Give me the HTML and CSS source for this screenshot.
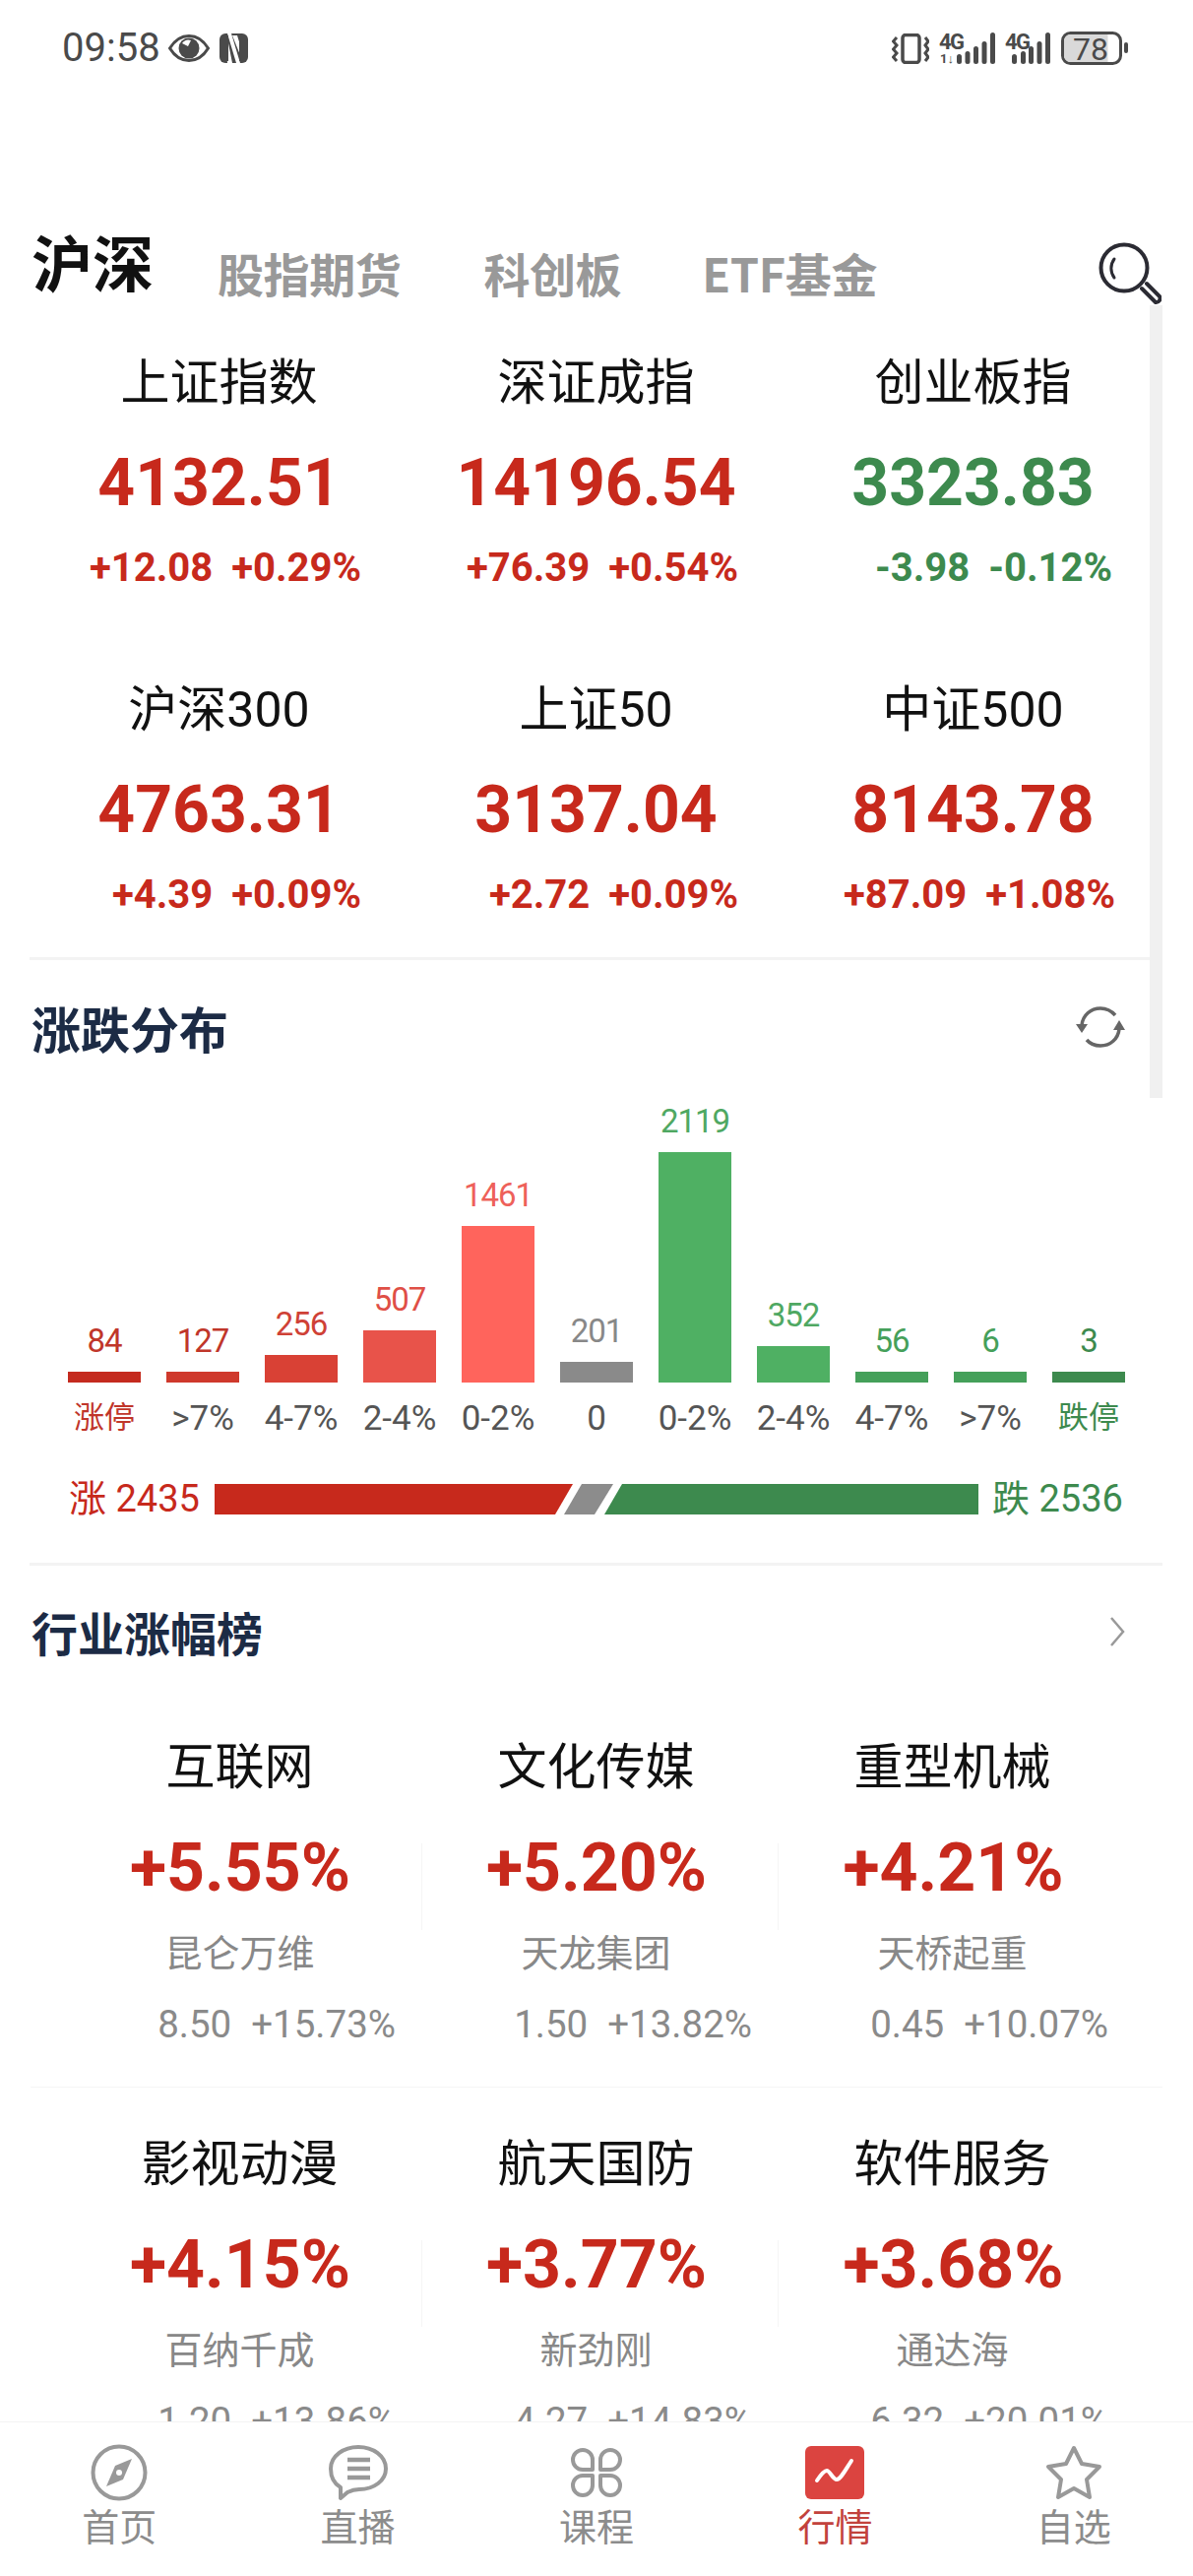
FILE: index.html
```html
<!DOCTYPE html>
<html lang="zh-CN">
<head>
<meta charset="utf-8">
<title>行情</title>
<link rel="stylesheet" href="styles.css">
</head>
<body>
<div class="phone">
  <header class="status">
    <div class="status-left">
      <span class="clock">09:58</span>
      <svg class="ic-eye" width="42" height="28" viewBox="0 0 42 28"><path d="M1.500 14C7 5 13.500 1.500 21 1.500S35 5 40.500 14C35 23 28.500 26.500 21 26.500S7 23 1.500 14Z" fill="none" stroke="#4a4a4a" stroke-width="3"/><circle cx="21" cy="14" r="10.500" fill="#4a4a4a"/><path d="M14 9a8 8 0 0 1 9-3l-3 6z" fill="#fff"/></svg>
      <svg class="ic-nfc" width="29" height="30" viewBox="0 0 29 30"><rect width="29" height="30" rx="6" fill="#4a4a4a"/><path d="M8 0h4l9 30h-4zM13 2h5l5 16-2 4zM6 8l2-3 5 25H8z" fill="#fff"/><path d="M6 2h3v26H6zM20 2h3v26h-3z" fill="#4a4a4a"/></svg>
    </div>
    <div class="status-right">
      <svg class="ic-vib" width="38" height="31" viewBox="0 0 38 31"><rect x="11" y="1.500" width="17" height="28" rx="3" fill="none" stroke="#4a4a4a" stroke-width="3.500"/><path d="M5 4 1.500 8 5 12 1.500 16 5 20 1.500 24 5 28M34 4 37 8 34 12 37 16 34 20 37 24 34 28" fill="none" stroke="#4a4a4a" stroke-width="3"/></svg>
      <svg class="sig sig-a" width="58" height="32" viewBox="0 0 58 32"><text class="sig-text" x="0" y="17">4G</text><text class="sig-small" x="1" y="31">1↓</text><g fill="#4a4a4a"><rect x="18" y="22" width="5" height="10" rx="2.500"/><rect x="26.500" y="19" width="5" height="13" rx="2.500"/><rect x="35" y="14" width="5" height="18" rx="2.500"/><rect x="43.500" y="9" width="5" height="23" rx="2.500"/><rect x="52" y="0" width="5" height="32" rx="2.500"/></g></svg>
      <svg class="sig sig-b" width="47" height="32" viewBox="0 0 47 32"><text class="sig-text" x="0" y="17">4G</text><g fill="#4a4a4a"><rect x="7" y="22" width="5" height="10" rx="2.500"/><rect x="16" y="19" width="5" height="13" rx="2.500"/><rect x="24" y="14" width="5" height="18" rx="2.500"/><rect x="32.500" y="9" width="5" height="23" rx="2.500"/><rect x="41" y="0" width="5" height="32" rx="2.500"/></g></svg>
      <svg class="sig ic-batt" width="68" height="34" viewBox="0 0 68 34"><rect x="1.500" y="1.500" width="59" height="31" rx="8" fill="#fff" stroke="#4a4a4a" stroke-width="3"/><path d="M9.500 3h38v28h-38a6.500 6.500 0 0 1-6.500-6.500v-15a6.500 6.500 0 0 1 6.500-6.500z" fill="#d9d9d9"/><text class="batt-text" x="30" y="28.500" text-anchor="middle">78</text><rect x="64" y="11" width="4" height="11" rx="2" fill="#4a4a4a"/></svg>
    </div>
  </header>

  <nav class="tabs">
    <span class="tab tab-on">沪深</span>
    <span class="tab">股指期货</span>
    <span class="tab">科创板</span>
    <span class="tab">ETF基金</span>
    <svg class="ic-search" width="64" height="66" viewBox="0 0 64 66"><circle cx="26" cy="26" r="23.500" fill="none" stroke="#2b2b33" stroke-width="4"/><path d="M16 17a16 16 0 0 0 0 19" fill="none" stroke="#2b2b33" stroke-width="3" stroke-linecap="round"/><path d="M44 47l14 14a4 4 0 0 0 4-6L49 42" fill="none" stroke="#2b2b33" stroke-width="4" stroke-linecap="round"/></svg>
  </nav>

  <main class="content">
    <section class="indices">
      <div class="idx"><h3 class="idx-name">上证指数</h3><div class="idx-val up">4132.51</div><div class="idx-chg up"><span>+12.08</span><span>+0.29%</span></div></div>
      <div class="idx"><h3 class="idx-name">深证成指</h3><div class="idx-val up">14196.54</div><div class="idx-chg up"><span>+76.39</span><span>+0.54%</span></div></div>
      <div class="idx"><h3 class="idx-name">创业板指</h3><div class="idx-val down">3323.83</div><div class="idx-chg down"><span>-3.98</span><span>-0.12%</span></div></div>
      <div class="idx"><h3 class="idx-name">沪深300</h3><div class="idx-val up">4763.31</div><div class="idx-chg up"><span>+4.39</span><span>+0.09%</span></div></div>
      <div class="idx"><h3 class="idx-name">上证50</h3><div class="idx-val up">3137.04</div><div class="idx-chg up"><span>+2.72</span><span>+0.09%</span></div></div>
      <div class="idx"><h3 class="idx-name">中证500</h3><div class="idx-val up">8143.78</div><div class="idx-chg up"><span>+87.09</span><span>+1.08%</span></div></div>
    </section>

    <section class="dist">
      <div class="sec-head">
        <h2 class="sec-title">涨跌分布</h2>
        <svg width="50" height="42" viewBox="0 0 50 42"><path d="M6 19C7 9 15 2 25 2c6 0 11 2.500 15 7" fill="none" stroke="#666" stroke-width="3.500"/><path d="M44 23c-1 10-9 17-19 17-6 0-11-2.500-14-6" fill="none" stroke="#666" stroke-width="3.500"/><path d="M0 18h12l-6 9zM38 24h12l-6-10z" fill="#666"/></svg>
      </div>
      <div class="chart">
        <div class="col"><span class="num t-r1">84</span><i class="bar b-r1" style="height:11px"></i><span class="lab lab-cjk t-r1">涨停</span></div>
        <div class="col"><span class="num t-r1">127</span><i class="bar b-r2" style="height:11px"></i><span class="lab">&gt;7%</span></div>
        <div class="col"><span class="num t-r2">256</span><i class="bar b-r3" style="height:28px"></i><span class="lab">4-7%</span></div>
        <div class="col"><span class="num t-r3">507</span><i class="bar b-r4" style="height:53px"></i><span class="lab">2-4%</span></div>
        <div class="col"><span class="num t-r4">1461</span><i class="bar b-r5" style="height:159px"></i><span class="lab">0-2%</span></div>
        <div class="col"><span class="num t-n">201</span><i class="bar b-n" style="height:21px"></i><span class="lab">0</span></div>
        <div class="col"><span class="num t-g1">2119</span><i class="bar b-g1" style="height:234px"></i><span class="lab">0-2%</span></div>
        <div class="col"><span class="num t-g1">352</span><i class="bar b-g1" style="height:37px"></i><span class="lab">2-4%</span></div>
        <div class="col"><span class="num t-g2">56</span><i class="bar b-g2" style="height:11px"></i><span class="lab">4-7%</span></div>
        <div class="col"><span class="num t-g2">6</span><i class="bar b-g2" style="height:11px"></i><span class="lab">&gt;7%</span></div>
        <div class="col"><span class="num t-g3">3</span><i class="bar b-g3" style="height:11px"></i><span class="lab lab-cjk t-g3">跌停</span></div>
      </div>
      <div class="ratio">
        <span class="ratio-txt up">涨 2435</span>
        <svg class="ratio-bar" width="776" height="31" viewBox="0 0 776 31"><polygon points="0,0 364,0 346,31 0,31" fill="#c7291c"/><polygon points="373,0 405,0 386,31 355,31" fill="#8c8c8c"/><polygon points="414,0 776,0 776,31 396,31" fill="#3d8a4e"/></svg>
        <span class="ratio-txt down">跌 2536</span>
      </div>
    </section>

    <section class="rank">
      <div class="sec-head">
        <h2 class="sec-title">行业涨幅榜</h2>
        <svg class="chev" width="16" height="30" viewBox="0 0 16 30"><path d="M2 1l12 14L2 29" fill="none" stroke="#999" stroke-width="2.500"/></svg>
      </div>
      <div class="ind-row ind-line">
        <div class="ind"><h3 class="ind-name">互联网</h3><div class="ind-pct-box"><span class="ind-pct">+5.55%</span></div><div class="ind-stock">昆仑万维</div><div class="ind-vals">8.50<b></b>+15.73%</div></div>
        <div class="ind"><h3 class="ind-name">文化传媒</h3><div class="ind-pct-box"><span class="ind-pct">+5.20%</span></div><div class="ind-stock">天龙集团</div><div class="ind-vals">1.50<b></b>+13.82%</div></div>
        <div class="ind"><h3 class="ind-name">重型机械</h3><div class="ind-pct-box"><span class="ind-pct">+4.21%</span></div><div class="ind-stock">天桥起重</div><div class="ind-vals">0.45<b></b>+10.07%</div></div>
      </div>
      <div class="ind-row">
        <div class="ind"><h3 class="ind-name">影视动漫</h3><div class="ind-pct-box"><span class="ind-pct">+4.15%</span></div><div class="ind-stock">百纳千成</div><div class="ind-vals">1.20<b></b>+13.86%</div></div>
        <div class="ind"><h3 class="ind-name">航天国防</h3><div class="ind-pct-box"><span class="ind-pct">+3.77%</span></div><div class="ind-stock">新劲刚</div><div class="ind-vals">4.27<b></b>+14.83%</div></div>
        <div class="ind"><h3 class="ind-name">软件服务</h3><div class="ind-pct-box"><span class="ind-pct">+3.68%</span></div><div class="ind-stock">通达海</div><div class="ind-vals">6.32<b></b>+20.01%</div></div>
      </div>
    </section>
  </main>

  <div class="scroll-thumb"></div>

  <footer class="tabbar">
    <div class="tb"><svg width="60" height="58" viewBox="0 0 60 58"><circle cx="30" cy="29" r="26.500" fill="none" stroke="#999" stroke-width="4"/><path d="M43 15 34 36 17 43 26 22z" fill="#999"/><circle cx="30" cy="29" r="3" fill="#fff"/></svg><span>首页</span></div>
    <div class="tb"><svg width="60" height="58" viewBox="0 0 60 58"><path d="M30 3c15 0 28 9 28 22 0 12-12 21-27 21-4 0-8 1-12 3l-7 6v-11C5 40 2 33 2 25 2 12 15 3 30 3Z" fill="none" stroke="#999" stroke-width="4" stroke-linejoin="round"/><path d="M19 16h23M19 25h23M19 34h23" stroke="#999" stroke-width="4.500"/></svg><span>直播</span></div>
    <div class="tb"><svg width="60" height="58" viewBox="0 0 60 58"><g fill="none" stroke="#999" stroke-width="4" stroke-linejoin="round"><path d="M26 26H16a10 10 0 1 1 10-10z"/><path d="M34 26H44a10 10 0 1 0-10-10z"/><path d="M26 32H16a10 10 0 1 0 10 10z"/><path d="M34 32H44a10 10 0 1 1-10 10z"/></g></svg><span>课程</span></div>
    <div class="tb tb-on"><svg width="60" height="58" viewBox="0 0 60 58"><rect x="0" y="2" width="60" height="54" rx="6" fill="#db4440"/><path d="M12 37C16 31 19 27 22 27c3 0 6 9 10 9s9-10 15-19" fill="none" stroke="#fff" stroke-width="4" stroke-linecap="round"/></svg><span>行情</span></div>
    <div class="tb"><svg width="60" height="58" viewBox="0 0 60 58"><path d="M30 4l8 16 18 3-13 13 3 18-16-9-16 9 3-18L4 23l18-3z" fill="none" stroke="#999" stroke-width="4" stroke-linejoin="round"/></svg><span>自选</span></div>
  </footer>
</div>
</body>
</html>
```

FILE: styles.css
```css
* { box-sizing: border-box; }
html, body { margin: 0; padding: 0; background: #fff; }
body { font-family: Roboto, "Noto Sans CJK SC", "Noto Sans", sans-serif; }
h2, h3 { margin: 0; font-weight: 400; }

.phone { position: relative; width: 1212px; height: 2616px; overflow: hidden; display: flex; flex-direction: column; background: #fff; }

.up { color: #c7291c; }
.down { color: #3d8a4e; }

/* status bar */
.status { flex: none; height: 100px; padding: 32px 66px 0 63px; display: flex; justify-content: space-between; align-items: flex-start; color: #4a4a4a; }
.status-left { display: flex; align-items: center; height: 34px; }
.clock { font-size: 40px; line-height: 34px; font-weight: 400; }
.ic-eye { margin-left: 8px; }
.ic-nfc { margin-left: 10px; }
.status-right { display: flex; align-items: center; height: 34px; }
.sig { overflow: visible; }
.sig-a { margin-left: 10px; }
.sig-b { margin-left: 9px; }
.ic-batt { margin-left: 10px; }
.sig-text { font: 700 22px "Roboto", sans-serif; letter-spacing: -1.5px; fill: #4a4a4a; }
.sig-small { font: 700 13px "Roboto", sans-serif; fill: #4a4a4a; }
.batt-text { font: 400 32px "Roboto", sans-serif; fill: #4a4a4a; }

/* top tabs */
.tabs { flex: none; height: 220px; padding: 0 32px 10px 32px; display: flex; align-items: flex-end; }
.tab { font-family: "Noto Sans CJK SC", sans-serif; font-size: 47px; line-height: 66px; font-weight: 700; letter-spacing: -.4px; color: #999; margin-left: 82px; white-space: nowrap; }
.tab:nth-child(2) { margin-left: 65px; }
.tab:nth-child(3) { margin-left: 84px; }
.tab-on { font-size: 62px; line-height: 84px; letter-spacing: 0; color: #111; margin-left: 0; margin-bottom: 3px; }
.ic-search { margin-left: auto; margin-bottom: -2px; }

/* content */
.content { flex: 1; min-height: 0; overflow: hidden; }

.indices { display: grid; grid-template-columns: repeat(3, 383px); row-gap: 84px; padding: 34px 0 38px 31px; }
.idx-name { font-family: Roboto, "Noto Sans CJK SC", sans-serif; font-size: 50px; line-height: 70px; color: #111; text-align: center; }
.idx-val { margin-top: 27px; font-size: 66px; line-height: 80px; font-weight: 700; text-align: center; }
.idx-chg { margin-top: 21px; height: 50px; font-size: 40px; line-height: 50px; font-weight: 700; display: flex; justify-content: flex-end; gap: 19px; padding-right: 47px; }
.idx:nth-child(3) .idx-chg { padding-right: 50px; }

.dist { margin-left: 30px; width: 1151px; border-top: 3px solid #f3f3f3; padding-top: 33px; padding-bottom: 47px; border-bottom: 3px solid #f3f3f3; }
.sec-head { display: flex; justify-content: space-between; align-items: center; height: 70px; padding: 0 38px 0 2px; }
.sec-title { font-family: "Noto Sans CJK SC", sans-serif; font-size: 50px; line-height: 70px; font-weight: 700; color: #1c2b45; }
.rank .sec-title { font-size: 47px; }

.chart { display: flex; align-items: flex-end; gap: 26px; height: 326px; padding-left: 39px; }
.col { width: 74px; display: flex; flex-direction: column; align-items: center; position: relative; }
.num { font-size: 33px; line-height: 36px; letter-spacing: -1px; margin-bottom: 13px; }
.bar { display: block; width: 74px; }
.lab { position: absolute; top: 100%; margin-top: 19px; font-size: 35px; line-height: 36px; color: #555; white-space: nowrap; }
.lab-cjk { font-family: "Noto Sans CJK SC", sans-serif; font-size: 31px; margin-top: 15px; }

.b-r1 { background: #c42a1e; } .b-r2 { background: #cf392c; } .b-r3 { background: #d94135; } .b-r4 { background: #e8534a; } .b-r5 { background: #ff645c; }
.b-n { background: #8a8a8a; }
.b-g1 { background: #4fb063; } .b-g2 { background: #45a05a; } .b-g3 { background: #3d8a4e; }
.t-r1 { color: #c0362a; } .t-r2 { color: #cf4136; } .t-r3 { color: #df4f46; } .t-r4 { color: #ee615a; }
.t-n { color: #888; }
.t-g1 { color: #4fa862; } .t-g2 { color: #45a05a; } .t-g3 { color: #3d8a4e; }

.ratio { display: flex; align-items: center; height: 36px; margin-top: 100px; padding-left: 40px; }
.ratio-txt { font-size: 38px; line-height: 36px; white-space: nowrap; width: 134px; }
.ratio-bar { margin: 0 14px; flex: none; }

.rank .sec-head { margin-left: 30px; width: 1151px; margin-top: 32px; }

.ind-row { margin: 20px 0 0 31px; width: 1150px; padding: 43px 0 0 36px; display: grid; grid-template-columns: repeat(3, 362px); }
.ind-line { border-bottom: 1px solid #f5f5f5; padding-bottom: 38px; }
.ind-row + .ind-row { margin-top: 0; padding-top: 38px; }
.ind-name { font-family: "Noto Sans CJK SC", sans-serif; font-size: 50px; line-height: 70px; color: #111; text-align: center; padding-right: 9px; }
.ind-pct-box { margin-top: 47px; height: 88px; padding-right: 7px; text-align: center; border-right: 1px solid #f5f5f5; }
.ind:last-child .ind-pct-box { border-right: 0; }
.ind-pct { display: block; font-size: 68px; line-height: 50px; font-weight: 700; color: #c7291c; }
.ind-stock { margin-top: -4px; font-family: "Noto Sans CJK SC", sans-serif; font-size: 38px; line-height: 50px; color: #888; text-align: center; padding-right: 9px; }
.ind-vals { margin-top: 25px; font-size: 38.500px; line-height: 50px; color: #8a8a8a; text-align: right; padding-right: 27px; white-space: nowrap; }
.ind-vals b { display: inline-block; width: 20px; }

/* overlay scrollbar */
.scroll-thumb { position: absolute; left: 1168px; top: 310px; width: 13px; height: 805px; background: #f0f0f0; }

/* bottom bar */
.tabbar { flex: none; height: 157px; background: #fff; border-top: 1px solid #f3f3f3; display: grid; grid-template-columns: repeat(5, 1fr); padding-top: 22px; }
.tb { display: flex; flex-direction: column; align-items: center; }
.tb span { font-family: "Noto Sans CJK SC", sans-serif; font-size: 38px; line-height: 44px; color: #8c8c8c; margin-top: 2px; }
.tb-on span { color: #c2423c; }
```
